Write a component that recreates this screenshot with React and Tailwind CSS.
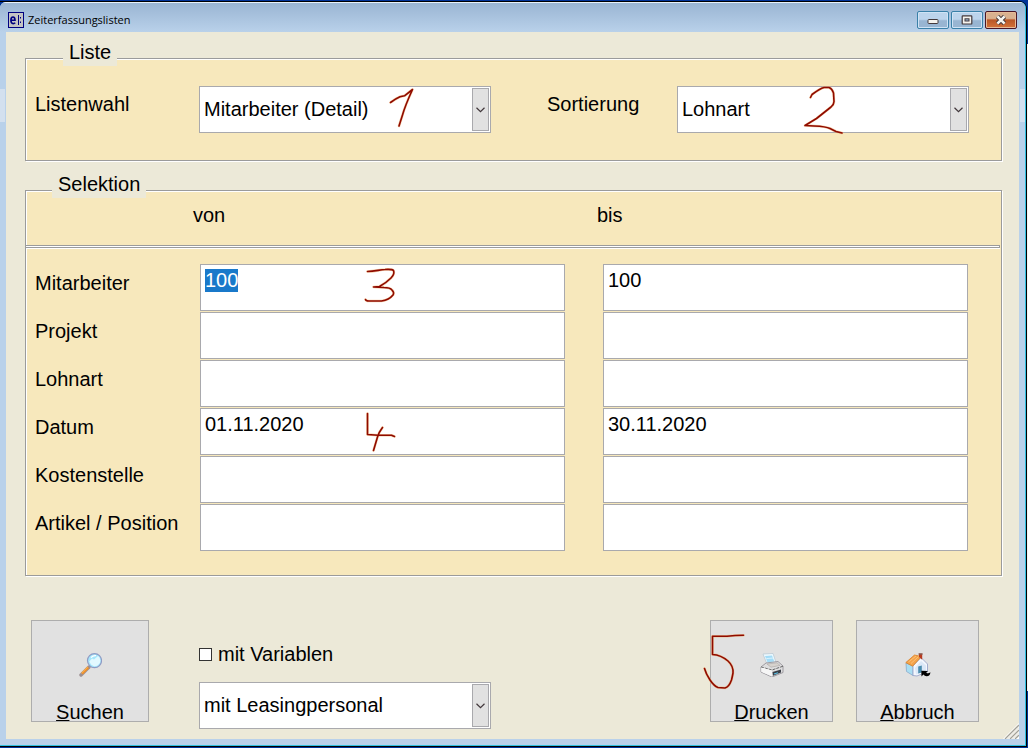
import React, { useEffect, useRef, useState } from 'react';

const LIST_OPTIONS = ['Mitarbeiter (Detail)'];
const SORT_OPTIONS = ['Lohnart'];
const LEASING_OPTIONS = ['mit Leasingpersonal'];

const ROWS = [
  { id: 'mitarbeiter', label: 'Mitarbeiter', von: '100', bis: '100' },
  { id: 'projekt', label: 'Projekt', von: '', bis: '' },
  { id: 'lohnart', label: 'Lohnart', von: '', bis: '' },
  { id: 'datum', label: 'Datum', von: '01.11.2020', bis: '30.11.2020' },
  { id: 'kostenstelle', label: 'Kostenstelle', von: '', bis: '' },
  { id: 'artikel', label: 'Artikel / Position', von: '', bis: '' }
];

// Pen strokes drawn over a control
const Ink = ({ className, viewBox, d }) => (
  <svg
    aria-hidden="true"
    viewBox={viewBox}
    className={`absolute pointer-events-none ${className}`}
    fill="none"
    strokeLinecap="round"
    strokeLinejoin="round"
  >
    <path d={d} stroke="#f0b070" strokeWidth="2.6" opacity="0.6" />
    <path d={d} stroke="#8f0a00" strokeWidth="1.6" />
  </svg>
);

const STEP_INK = {
  mitarbeiter: {
    className: 'left-[160px] top-0 w-[40px] h-[46px]',
    viewBox: '360 264 40 46',
    d: 'M367.5 271.5 C375 271.5 380 269.5 385 269.5 C390 269.2 392.5 269.2 393.5 270.5 Q395 274 391 278 Q386 283 379.5 286.5 L373.5 287 L384 287.5 Q390 287.5 392 290 Q394.5 292.5 393 295 Q389 300 381.5 301 L369 301 Q366 301 365.5 299.5'
  },
  datum: {
    className: 'left-[160px] top-0 w-[40px] h-[46px]',
    viewBox: '360 408 40 46',
    d: 'M367.5 413.5 L367.5 434.5 L378 435.3 L391.5 435.3 L394.5 436.5 M382.5 427.5 Q379 432 377.5 437 L373.5 450.5'
  }
};

const SearchIcon = () => (
  <svg width="24" height="24" viewBox="0 0 24 24" aria-hidden="true">
    <path d="M3 22 L11 14" stroke="#9c8f91" strokeWidth="3.4" strokeLinecap="round" />
    <path d="M4 20.6 L10.3 14.3" stroke="#f0912a" strokeWidth="2.4" />
    <path d="M3.6 20 L9.8 13.9" stroke="#ffc56b" strokeWidth="0.8" />
    <circle cx="16.5" cy="7.6" r="7" fill="#a5e7fc" stroke="#8f9bc4" strokeWidth="1.2" />
    <path d="M11.3 8.6 L14 5.6 L16 6.6 L20 3.1 Q23 5.6 22.1 9.6 Q20 13.6 16 13.2 Q13 12.6 11.3 8.6Z" fill="#e2f9ff" />
    <path d="M13 4.6 Q15 2.2 18 2.6" stroke="#fff" strokeWidth="1.2" fill="none" />
  </svg>
);

const PrinterIcon = () => (
  <svg width="24" height="24" viewBox="0 0 24 24" aria-hidden="true">
    <path d="M3 1 L13 0.5 L16 9.5 L7 11Z" fill="#eefaff" stroke="#b5c4d0" strokeWidth="0.7" />
    <path d="M5 3 L12 2.5 L14.3 8.5 L7.5 9.5Z" fill="#a4dcf7" />
    <path d="M6.3 5.6 L13 5" stroke="#d9f4ff" strokeWidth="1" />
    <path d="M1 14 L6 10 L18 8.5 L23 13 L23 19.5 L12 24 L1 19Z" fill="#dededf" stroke="#96939a" strokeWidth="0.9" />
    <path d="M7 11 L17 9.8 L20 12.4 L11 14.2Z" fill="#d7d3ce" stroke="#a9a5a3" strokeWidth="0.6" />
    <path d="M1 14 L12 17 L23 13.2" stroke="#666" strokeWidth="1" fill="none" strokeDasharray="3 1" />
    <path d="M1.2 14.4 L12 17.4 L12 23.5 L1.2 18.8Z" fill="#f6f6f6" />
    <path d="M12.5 19 L21 16.5 L21 19.5 L13 22.7Z" fill="#3a3e46" />
    <path d="M14 21 L18 19.8" stroke="#5bc3e8" strokeWidth="1.2" />
  </svg>
);

const HomeIcon = () => (
  <svg width="26" height="24" viewBox="0 0 26 24" aria-hidden="true">
    <path d="M1 10 L8 13 L8 22.5 L1.5 18.5Z" fill="#a9def2" stroke="#8aa9cc" strokeWidth="0.8" />
    <path d="M8 13 L16 4.5 L22.5 11 L22.5 18.5 L12 23 L8 22.5Z" fill="#f3f7fd" stroke="#9aa5c9" strokeWidth="0.9" />
    <path d="M10 15 L16 8 L21 12.5 L21 18 L11 21.5Z" fill="#dce8f8" />
    <path d="M0.8 9.6 L9.5 2 L16.5 3.5 L7.6 13.2Z" fill="#f4a34a" stroke="#d98128" strokeWidth="0.8" />
    <path d="M3.5 9 L11 3 M6 10.5 L13.5 3.6" stroke="#ffc680" strokeWidth="0.8" />
    <path d="M14 1.6 H17.2 V6.8 L14 4Z" fill="#b83a1e" />
    <path d="M13.6 1 H17.6" stroke="#6d2a1c" strokeWidth="1.2" />
    <path d="M13.2 13.5 L16.8 12.6 V19.5 L13.2 20.5Z" fill="#4b8cae" />
    <path d="M16.3 17.8 L23 18 L21.2 19.4 Q23 21.4 25.4 19.2 Q25.2 23 21.6 23.2 Q19.6 23.2 18.4 21.6 L16.5 23.6Z" fill="#000" />
  </svg>
);

const SelectBox = ({ id, label, options, children }) => {
  const [value, setValue] = useState(options[0]);

  return (
    <div className="relative">
      <select
        id={id}
        aria-label={label}
        value={value}
        onChange={(e) => setValue(e.target.value)}
        className="block w-full h-[47px] appearance-none rounded-none border border-[#a9a9ad] bg-white pl-1 pr-6 pb-0.5 outline-none"
      >
        {options.map((option) => (
          <option key={option} value={option}>{option}</option>
        ))}
      </select>
      <span className="absolute inset-y-0.5 right-0.5 w-[17px] flex items-center justify-center border border-[#a9a9ad] bg-[#e1e1e1] pointer-events-none">
        <svg width="9" height="6" viewBox="0 0 9 6" fill="none" aria-hidden="true">
          <path d="M0.5 0.8 L4.5 4.6 L8.5 0.8" stroke="#40363a" strokeWidth="1.2" />
        </svg>
      </span>
      {children}
    </div>
  );
};

const GroupBox = ({ title, legendClass, className, children }) => (
  <fieldset
    className={`relative mx-auto w-full border border-[#9b9b9b] bg-[#f7e8bc] shadow-[1px_1px_0_#fff,inset_1px_1px_0_#fff] ${className}`}
  >
    <legend className={`absolute -top-[17px] h-6 bg-[#ece9d8] px-1.5 leading-5 ${legendClass}`}>{title}</legend>
    {children}
  </fieldset>
);

const ActionButton = ({ accessKey, rest, icon, className, children }) => (
  <button
    type="button"
    className={`relative h-[102px] shrink-0 flex flex-col items-center justify-end border border-[#adadad] bg-[#e1e1e1] ${className}`}
  >
    <span className="mb-[26px]">{icon}</span>
    <span className="leading-[18px]">
      <u className="underline-offset-1 decoration-1">{accessKey}</u>{rest}
    </span>
    {children}
  </button>
);

const windowButton =
  'w-8 h-[18px] flex items-center justify-center rounded-xs border border-[#3a80a8] shadow-[inset_0_0_0_1px_#cfe3f5] bg-linear-to-b from-[#bcd4ec] from-45% to-[#98b5d2] to-55%';

const TitleBar = () => (
  <header className="h-[30px] shrink-0 flex items-center justify-between border-t border-[#e8f1fa] bg-linear-to-b from-[#9ab5d3] to-[#b9d1ea] pl-2 pr-2 pt-1">
    <div className="flex items-center gap-1">
      <svg width="16" height="16" viewBox="0 0 16 16" aria-hidden="true">
        <rect x="0.5" y="0.5" width="15" height="15" fill="#c3c3c3" stroke="#000080" />
        <path d="M3 8.3 H7 Q7 5 5 5 Q2.9 5 2.9 8.3 Q2.9 11.6 5.2 11.6 Q6.4 11.6 7.2 10.8" fill="none" stroke="#000080" strokeWidth="1.6" />
        <path d="M10.5 3 V13" stroke="#000080" strokeWidth="1" />
        <path d="M12 5 H13 V6.5 H12Z M12 9.5 H13 V11 H12Z" fill="#000080" />
      </svg>
      <h1 className="font-['Open_Sans','Noto_Sans',sans-serif] text-[11px] leading-4 text-black">Zeiterfassungslisten</h1>
    </div>
    <div className="flex gap-0.5">
      <button type="button" aria-label="Minimieren" className={windowButton}>
        <svg width="12" height="10" viewBox="0 0 12 10" aria-hidden="true">
          <rect x="1" y="4.5" width="10" height="4" rx="0.8" fill="#f5f3ee" stroke="#43393b" />
        </svg>
      </button>
      <button type="button" aria-label="Maximieren" className={windowButton}>
        <svg width="12" height="10" viewBox="0 0 12 10" aria-hidden="true">
          <rect x="1.2" y="0.8" width="9.6" height="8.2" rx="0.6" fill="#f5f3ee" stroke="#43393b" strokeWidth="1.2" />
          <rect x="4" y="3.8" width="4" height="2.2" fill="#9ab5d3" stroke="#43393b" />
        </svg>
      </button>
      <button
        type="button"
        aria-label="Schließen"
        className="w-8 h-[18px] flex items-center justify-center rounded-xs border border-[#4a1626] shadow-[inset_0_0_0_1px_#e6bb98] bg-linear-to-b from-[#d9b18f] from-40% via-[#b95727] via-50% to-[#d57339]"
      >
        <svg width="12" height="10" viewBox="0 0 12 10" aria-hidden="true">
          <path d="M2.4 1.4 L9.6 8.6 M9.6 1.4 L2.4 8.6" stroke="#43393b" strokeWidth="4.4" />
          <path d="M2.4 1.4 L9.6 8.6 M9.6 1.4 L2.4 8.6" stroke="#f5f3ee" strokeWidth="2.6" />
        </svg>
      </button>
    </div>
  </header>
);

const App = () => {
  const [rows, setRows] = useState(ROWS);
  const [withVariables, setWithVariables] = useState(false);
  const firstField = useRef(null);

  useEffect(() => {
    firstField.current.focus();
    firstField.current.select();
  }, []);

  const updateRow = (id, key, value) => {
    setRows(rows.map((row) => (row.id === id ? { ...row, [key]: value } : row)));
  };

  const inputClass =
    'block w-full h-[47px] rounded-none border border-[#a9a9ad] bg-white px-1 pb-[15px] leading-6 outline-none caret-transparent selection:bg-[#1979ca] selection:text-white';

  return (
    <div className="min-h-screen flex bg-[linear-gradient(#003399_44px,#f4f4f4_44px,#f4f4f4_691px,#003399_691px)] pt-px pr-px pb-px font-['Liberation_Sans',Arial,sans-serif] text-[20px] text-black">
      <div className="grow flex border-y border-r border-black rounded-tr-lg bg-[#003399]">
        <div className="relative grow flex flex-col border-b border-r border-[#2fc0e0] rounded-t-md overflow-hidden bg-[#b9d1ea] pb-1.5">
          <span className="absolute left-0 top-[87px] w-[5px] h-[33px] bg-[#d3e0ef]" />
          <span className="absolute right-0 top-[87px] w-[5px] h-[33px] bg-[#d3e0ef]" />
          <TitleBar />

          <main className="relative grow mx-1.5 bg-[#ece9d8] pt-[26px] pb-2.5">
            <form onSubmit={(e) => e.preventDefault()}>
              <div className="pl-[19px] pr-[17px]">
                <GroupBox title="Liste" legendClass="left-[37px]" className="py-[27px] pl-[9px] pr-8">
                  <div className="grid grid-cols-[164px_1fr_186px_1fr]">
                    <label htmlFor="listenwahl" className="pt-2 leading-5">Listenwahl</label>
                    <SelectBox id="listenwahl" options={LIST_OPTIONS}>
                      <Ink
                        className="left-[186px] top-0 w-[32px] h-[47px]"
                        viewBox="385 86 32 47"
                        d="M390.5 102.5 Q396 98.5 400 96.8 L404.5 95.8 L412.5 89.5 Q405 106 402.5 115 L399 126"
                      />
                    </SelectBox>
                    <label htmlFor="sortierung" className="pl-14 pt-2 leading-5">Sortierung</label>
                    <SelectBox id="sortierung" options={SORT_OPTIONS}>
                      <Ink
                        className="left-[123px] top-0 w-[48px] h-[50px]"
                        viewBox="800 86 48 50"
                        d="M810.5 97.5 L812 94.5 Q820 88.5 824 87.5 L829 87.5 Q832 88.5 833.5 93 L834 101.5 Q834 104.5 831 107 L816.5 118.5 L805 125.5 L814 126 Q826 126.5 830 128.5 L836 131.5 L842 133"
                      />
                    </SelectBox>
                  </div>
                </GroupBox>

                <GroupBox title="Selektion" legendClass="left-[26px]" className="mt-[29px] pb-6">
                  <div className="h-[54px] grid grid-cols-2 pl-[167px] pt-3 leading-6">
                    <span>von</span>
                    <span>bis</span>
                  </div>
                  <div className="mr-px mb-4 h-[3px] border-y border-r border-[#9b9b9b] bg-white shadow-[0_1px_0_#fff]" />
                  <div className="grid gap-px pl-[9px] pr-[33px]">
                    {rows.map((row, index) => (
                      <div key={row.id} className="grid grid-cols-[165px_1fr_1fr]">
                        <label htmlFor={`${row.id}-von`} className="pt-[9px] leading-5">{row.label}</label>
                        <div className="relative mr-[19px]">
                          <input
                            id={`${row.id}-von`}
                            ref={index === 0 ? firstField : null}
                            type="text"
                            value={row.von}
                            onChange={(e) => updateRow(row.id, 'von', e.target.value)}
                            className={inputClass}
                          />
                          {STEP_INK[row.id] && <Ink {...STEP_INK[row.id]} />}
                        </div>
                        <div className="ml-[19px]">
                          <input
                            id={`${row.id}-bis`}
                            aria-label={`${row.label} bis`}
                            type="text"
                            value={row.bis}
                            onChange={(e) => updateRow(row.id, 'bis', e.target.value)}
                            className={inputClass}
                          />
                        </div>
                      </div>
                    ))}
                  </div>
                </GroupBox>
              </div>

              <div className="flex items-start pl-[25px] pr-10 pt-11">
                <ActionButton accessKey="S" rest="uchen" icon={<SearchIcon />} className="w-[118px]" />
                <div className="ml-[50px] w-[292px]">
                  <label className="flex items-center gap-1.5 pt-[22px] mb-4 leading-6">
                    <input
                      type="checkbox"
                      checked={withVariables}
                      onChange={(e) => setWithVariables(e.target.checked)}
                      className="size-[13px] appearance-none border border-[#333] bg-white checked:bg-[#333]"
                    />
                    mit Variablen
                  </label>
                  <SelectBox id="leasing" label="Leasingpersonal" options={LEASING_OPTIONS} />
                </div>
                <div className="ml-auto flex gap-[23px]">
                  <ActionButton accessKey="D" rest="rucken" icon={<PrinterIcon />} className="w-[123px]">
                    <Ink
                      className="-left-[11px] top-[9px] w-[50px] h-[64px]"
                      viewBox="700 630 50 64"
                      d="M743.5 635.3 Q735 635.3 727 636.3 L712.5 636.3 L712.5 654.5 Q721 655 728 661 Q733.5 666 733 673 Q732.5 676 731.5 680 Q729 687 725 688 L718 687.5 Q714 686 710 680 Q706 674 704.5 668.5"
                    />
                  </ActionButton>
                  <ActionButton accessKey="A" rest="bbruch" icon={<HomeIcon />} className="w-[123px]" />
                </div>
              </div>
            </form>

            <svg width="16" height="16" viewBox="0 0 16 16" aria-hidden="true" className="absolute right-0 bottom-0">
              <path d="M0 16 L16 0 V16Z" fill="#fff" />
              <path d="M2 16 L16 2 M7 16 L16 7 M12 16 L16 12" stroke="#a3a196" strokeWidth="1.3" />
              <path d="M4.5 16 L16 4.5 M9.5 16 L16 9.5" stroke="#dedbcb" strokeWidth="1" />
            </svg>
          </main>
        </div>
      </div>
    </div>
  );
};

export default App;
